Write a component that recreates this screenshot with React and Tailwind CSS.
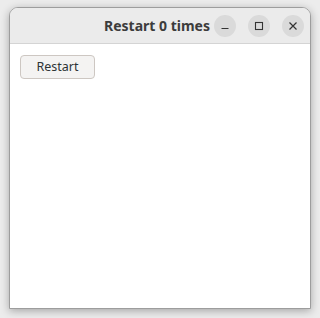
import React, { useState } from 'react'

const App = () => {
  const [count, setCount] = useState(0)

  return (
    <div className="w-[320px] h-[318px] bg-[#ececec] pt-[7px] px-[9px] pb-[9px] font-['Noto_Sans','Liberation_Sans',sans-serif]">
      {/* Window */}
      <div className="h-full flex flex-col bg-white rounded-t-[9px] border border-[#9d9d9d] shadow-[0_2px_9px_rgba(0,0,0,0.3)] overflow-hidden">
        <div className="h-[36px] shrink-0 flex items-center bg-[#ebebeb] border-b border-[#d4d4d4]">
          <div className="flex-1 text-right pr-[4px] text-[14px] font-bold text-[#3c3c3c] leading-none">
            Restart {count} times
          </div>
          <div className="flex items-center gap-[12px] pr-[6px]">
            <button className="w-[22px] h-[22px] rounded-full bg-[#dadada] flex items-center justify-center">
              <svg width="10" height="10" viewBox="0 0 10 10">
                <path d="M1.5 7.5h7" stroke="#333" strokeWidth="1.2" />
              </svg>
            </button>
            <button className="w-[22px] h-[22px] rounded-full bg-[#dadada] flex items-center justify-center">
              <svg width="10" height="10" viewBox="0 0 10 10">
                <rect x="1.5" y="1.5" width="7" height="7" fill="none" stroke="#333" strokeWidth="1.1" />
              </svg>
            </button>
            <button className="w-[22px] h-[22px] rounded-full bg-[#dadada] flex items-center justify-center">
              <svg width="10" height="10" viewBox="0 0 10 10">
                <path d="M1.5 1.5l7 7M8.5 1.5l-7 7" stroke="#333" strokeWidth="1.2" />
              </svg>
            </button>
          </div>
        </div>

        {/* Content */}
        <div className="flex-1 pt-[11px] pl-[10px]">
          <button
            onClick={() => setCount(count + 1)}
            className="w-[75px] h-[24px] rounded-[4px] border border-[#cdc7c2] bg-[#f4f3f2] text-[12.5px] text-[#2e3436] leading-none flex items-center justify-center"
          >
            Restart
          </button>
        </div>
      </div>
    </div>
  )
}

export default App
